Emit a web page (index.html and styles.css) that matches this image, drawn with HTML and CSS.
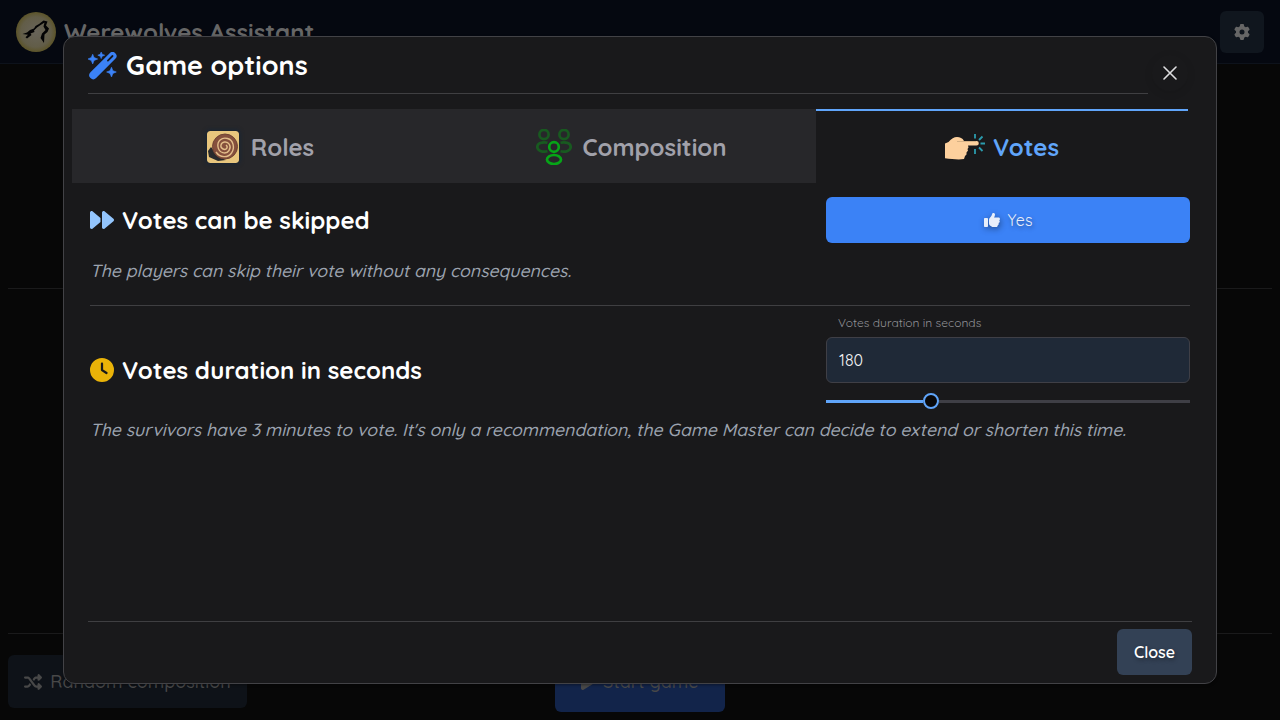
FILE: index.html
```html
<!DOCTYPE html>
<html lang="en">
<head>
<meta charset="utf-8">
<title>Werewolves Assistant</title>
<link rel="stylesheet" href="styles.css">
</head>
<body>
<div class="page">
  <header class="navbar">
    <svg class="logo" viewBox="0 0 40 40"><defs><radialGradient id="moon"><stop offset="0" stop-color="#68645a"/><stop offset=".75" stop-color="#625d48"/><stop offset="1" stop-color="#5c5429"/></radialGradient></defs><circle cx="20" cy="20" r="20" fill="url(#moon)"/><path fill="#030304" d="M6.500 22L11 20.500L14 18L18 16.500L19.500 14L23 12L27.500 8.500L31.500 9.500L30 13.500L33 16.500L31.500 20L28.500 22.500L28 31L24.500 26L26 21.500L29.500 18L27.500 14.500L28.500 10.500L23.500 13.800L21 15.500L18 18.500L18.500 20L14.500 21.500L15.500 23L11 26.500L9.500 25.200L12 22.800z"/></svg>
    <span class="brand">Werewolves Assistant</span>
    <button class="settings"><svg viewBox="0 0 512 512"><path d="M495.900 166.600c3.200 8.700 .5 18.400-6.400 24.600l-43.300 39.400c1.100 8.300 1.700 16.800 1.700 25.400s-.6 17.100-1.700 25.400l43.300 39.400c6.900 6.200 9.600 15.900 6.400 24.600c-4.400 11.900-9.700 23.300-15.800 34.300l-4.700 8.100c-6.600 11-14 21.400-22.100 31.200c-5.900 7.200-15.700 9.600-24.500 6.800l-55.700-17.700c-13.400 10.300-28.200 18.900-44 25.400l-12.500 57.100c-2 9.100-9 16.300-18.200 17.800c-13.800 2.300-28 3.500-42.500 3.500s-28.700-1.200-42.500-3.500c-9.200-1.500-16.200-8.700-18.200-17.800l-12.500-57.100c-15.800-6.500-30.600-15.100-44-25.400L83.100 425.900c-8.800 2.800-18.600 .3-24.500-6.800c-8.100-9.800-15.500-20.200-22.100-31.200l-4.700-8.100c-6.100-11-11.400-22.400-15.800-34.300c-3.200-8.700-.5-18.400 6.400-24.600l43.300-39.400C64.600 273.100 64 264.600 64 256s.6-17.100 1.700-25.400L22.400 191.200c-6.900-6.200-9.600-15.900-6.400-24.600c4.400-11.900 9.700-23.300 15.800-34.300l4.700-8.100c6.600-11 14-21.400 22.100-31.200c5.900-7.200 15.700-9.600 24.500-6.800l55.700 17.700c13.400-10.300 28.200-18.900 44-25.400l12.500-57.100c2-9.100 9-16.300 18.200-17.800C227.300 1.200 241.500 0 256 0s28.700 1.200 42.500 3.500c9.200 1.500 16.200 8.700 18.200 17.800l12.500 57.100c15.800 6.500 30.600 15.100 44 25.400l55.700-17.700c8.800-2.800 18.600-.3 24.500 6.800c8.100 9.800 15.500 20.200 22.100 31.200l4.700 8.100c6.100 11 11.400 22.400 15.800 34.300zM256 336a80 80 0 1 0 0-160 80 80 0 1 0 0 160z"/></svg></button>
  </header>
  <main class="lobby"></main>
  <footer class="actions">
    <button class="random"><svg viewBox="0 0 512 512"><path d="M403.800 34.400c12-5 25.700-2.200 34.900 6.900l64 64c6 6 9.400 14.100 9.400 22.600s-3.400 16.600-9.400 22.600l-64 64c-9.200 9.200-22.900 11.900-34.900 6.900s-19.800-16.600-19.800-29.600V160H352c-10.100 0-19.600 4.700-25.600 12.800L284 229.300 244 176l31.200-41.600C293.300 110.200 321.800 96 352 96h32V64c0-12.900 7.800-24.600 19.800-29.600zM164 282.700L204 336l-31.200 41.600C154.700 401.800 126.200 416 96 416H32c-17.700 0-32-14.300-32-32s14.300-32 32-32H96c10.100 0 19.600-4.700 25.600-12.800L164 282.700zm274.600 188c-9.200 9.200-22.900 11.900-34.900 6.900s-19.800-16.600-19.800-29.600V416H352c-30.200 0-58.700-14.200-76.800-38.400L121.600 172.800c-6-8.100-15.500-12.800-25.600-12.800H32c-17.700 0-32-14.300-32-32s14.300-32 32-32H96c30.200 0 58.700 14.200 76.800 38.400L326.400 339.200c6 8.100 15.500 12.800 25.600 12.800h32V320c0-12.900 7.800-24.600 19.800-29.600s25.700-2.200 34.900 6.900l64 64c6 6 9.400 14.100 9.400 22.600s-3.400 16.600-9.400 22.600l-64 64z"/></svg><span>Random composition</span></button>
    <button class="start"><svg viewBox="0 0 384 512"><path d="M73 39c-14.800-9.100-33.400-9.400-48.500-.9S0 62.600 0 80V432c0 17.400 9.400 33.400 24.500 41.900s33.700 8.100 48.500-.9L361 297c14.300-8.700 23-24.200 23-41s-8.700-32.200-23-41L73 39z"/></svg><span>Start game</span></button>
  </footer>
</div>

<div class="overlay">
<section class="dialog">
  <div class="dialog-head">
    <h1 class="dialog-title"><svg viewBox="0 0 30 28"><path d="M4.700 2.200L6 5.500L9.700 7L6 8.500L4.700 12L3.300 8.500L0 7L3.300 5.500zM13.200 0L14.200 2.200L16.700 3.200L14.200 4.200L13.200 6.600L12.200 4.200L9.800 3.200L12.200 2.200zM23.500 15.200L24.900 18.700L28.300 20L24.900 21.400L23.500 25L22 21.400L18.600 20L22 18.700z" stroke="currentColor" stroke-width=".6" stroke-linejoin="round"/><path d="M5.300 23.200L24.500 4" stroke="currentColor" stroke-width="8" stroke-linecap="round"/><path d="M19.900 8.600L24.500 4" stroke="#19191b" stroke-width="1.800" stroke-linecap="round"/></svg><span>Game options</span></h1>
    <button class="close-x"><svg viewBox="0 0 14 14"><path d="M1 1l12 12M13 1L1 13"/></svg></button>
  </div>

  <nav class="tabs">
    <div class="tab tab-roles">
      <svg class="roles-icon" viewBox="0 0 32 32"><rect width="32" height="32" rx="3" fill="#e8c67d"/><path d="M1 20l3-4 8 10 7 3-8 1-9-4z" fill="#292a2c"/><circle cx="18" cy="15.500" r="12.500" fill="#85503d"/><circle cx="18" cy="15.500" r="12.500" fill="none" stroke="#6f4333" stroke-width="1"/><path d="M9 21c4 6 12 6 15.500 1s2-13-4-14.500S10 10 11 16s8 8 11 3.500-.5-9-4.500-8.500-5 5.500-1.500 7 5.500-2 3-4" fill="none" stroke="#e2bd8a" stroke-width="1.400"/></svg>
      <span>Roles</span>
    </div>
    <div class="tab tab-composition">
      <svg class="group-icon" viewBox="0 0 36 36" stroke-width="2.700"><g stroke="#185a20"><circle cx="8" cy="5.500" r="4.600"/><circle cx="28" cy="5.500" r="4.600"/><path d="M11.500 13.800C6 12.500 1.300 14.500 1.300 18s5 5.500 10.200 4.300M24.500 13.800c5.500-1.300 10.200.7 10.200 4.200s-5 5.500-10.200 4.300"/></g><g stroke="#06a517"><circle cx="18" cy="18" r="4.800"/><ellipse cx="18" cy="30.500" rx="7" ry="4.500"/></g></svg>
      <span>Composition</span>
    </div>
    <div class="tab active">
      <svg class="vote-icon" viewBox="0 0 40 28"><path fill="#fdd09d" d="M0 10.500L3.500 9C6.500 5.500 9 4 12 4c3 0 5.500 1 7 4h12.500a2.300 2.300 0 0 1 0 4.600H23l.5 2-1 1.500 .5 1.500-1.500 2v2l-1.500 1.500-1 3c-6 .8-12 0-19-.8z"/><path d="M12 8.500h19" stroke="#d6b184" stroke-width="1"/><path d="M30 5.500V1M34 7l3.500-3.500M35.500 10.500H40M34 14.500l3.500 3.500M30 16v5" stroke="#2b9cae" stroke-width="1.800"/></svg>
      <span>Votes</span>
    </div>
  </nav>

  <div class="panel">
    <div class="option skip">
      <div class="option-row">
        <h2><svg class="forward" viewBox="0 0 512 512"><path d="M52.500 440.600c-9.500 7.900-22.800 9.700-34.100 4.400S0 428.400 0 416V96C0 83.600 7.200 72.300 18.400 67s24.500-3.600 34.100 4.400L224 214.300V297.700L52.500 440.600zM256 352V96c0-12.400 7.200-23.700 18.400-29s24.500-3.600 34.100 4.400l192 160c7.300 6.100 11.500 15.100 11.500 24.600s-4.200 18.500-11.500 24.600l-192 160c-9.500 7.900-22.800 9.700-34.100 4.400s-18.400-16.600-18.400-29V352z"/></svg><span>Votes can be skipped</span></h2>
        <button class="yes"><svg viewBox="0 0 512 512"><path d="M313.400 32.900c26 5.200 42.900 30.500 37.700 56.500l-2.300 11.400c-5.300 26.700-15.100 52.100-28.800 75.200H464c26.500 0 48 21.500 48 48c0 18.500-10.500 34.600-25.900 42.600C497 275.400 504 288.900 504 304c0 23.400-16.800 42.900-38.900 47.100c4.400 7.300 6.900 15.800 6.900 24.900c0 21.300-13.900 39.400-33.100 45.600c.7 3.300 1.100 6.800 1.100 10.400c0 26.500-21.500 48-48 48H294.500c-19 0-37.500-5.600-53.300-16.100l-38.500-25.700C176 420.400 160 390.400 160 358.300V247.100c0-29.200 13.300-56.700 36-75l7.400-5.900c26.500-21.200 44.600-51 51.200-84.200l2.300-11.400c5.200-26 30.500-42.900 56.500-37.700zM32 192H96c17.700 0 32 14.300 32 32V448c0 17.700-14.300 32-32 32H32c-17.700 0-32-14.300-32-32V224c0-17.700 14.300-32 32-32z"/></svg><span>Yes</span></button>
      </div>
      <p>The players can skip their vote without any consequences.</p>
    </div>
    <div class="option duration">
      <div class="option-row">
        <h2><svg class="clock" viewBox="0 0 512 512"><path d="M256 0a256 256 0 1 1 0 512A256 256 0 1 1 256 0zM232 120V256c0 8 4 15.500 10.700 20l96 64c11 7.400 25.900 4.400 33.300-6.700s4.400-25.900-6.700-33.300L280 243.200V120c0-13.300-10.700-24-24-24s-24 10.700-24 24z"/></svg><span>Votes duration in seconds</span></h2>
        <div class="field">
          <label>Votes duration in seconds</label>
          <div class="input">180</div>
          <div class="slider"><div class="range"></div><div class="handle"></div><div class="rest"></div></div>
        </div>
      </div>
      <p>The survivors have 3 minutes to vote. It's only a recommendation, the Game Master can decide to extend or shorten this time.</p>
    </div>
  </div>

  <div class="dialog-foot"><button class="close">Close</button></div>
</section>
</div>
</body>
</html>
```
FILE: styles.css
```css
* { box-sizing: border-box; }
body { margin: 0; background: #070707; font-family: Quicksand, Lato, "Open Sans", sans-serif; overflow: hidden; }
button { border: 0; padding: 0; font: inherit; display: flex; align-items: center; justify-content: center; }
h1, h2, p { margin: 0; }
svg { display: block; flex: none; fill: currentColor; }
span, label, p { white-space: nowrap; }

.page { width: 1280px; height: 720px; display: flex; flex-direction: column; }
.navbar { height: 64px; padding: 0 16px; display: flex; align-items: center; gap: 8px; background: #050810; border-bottom: 1px solid #0d121b; }
.logo { width: 40px; height: 40px; }
.brand { font-size: 24px; font-weight: 700; color: #666; }
.settings { margin-left: auto; width: 44px; height: 42px; border-radius: 6px; background: #10161e; color: #666; }
.settings svg { width: 16px; height: 16px; }
.lobby { height: 570px; margin: 0 8px; border-bottom: 1px solid #1a1a1b; background: linear-gradient(#1a1a1b, #1a1a1b) 0 224px / 100% 1px no-repeat; }
.actions { display: flex; align-items: center; padding: 17px 8px 0; gap: 308px; font-size: 18px; font-weight: 500; letter-spacing: .15px; }
.actions button { gap: 8px; color: #484848; border-radius: 6px; }
.random { width: 239px; height: 53px; background: #0e1218; }
.random svg { width: 18px; height: 18px; }
.start { width: 170px; height: 61px; background: #12244a; }
.start svg { width: 13.5px; height: 18px; }

.overlay { position: absolute; inset: 0; display: flex; align-items: center; justify-content: center; }
.dialog { width: 1154px; height: 648px; border: 1px solid #424246; border-radius: 12px; background: #19191b; color: #fff; display: flex; flex-direction: column; box-shadow: 0 1px 3px rgba(0,0,0,.4); }
.dialog-head { height: 72px; padding-left: 24px; display: flex; }
.dialog-title { width: 1060px; height: 57px; border-bottom: 1px solid #3f3f42; display: flex; align-items: center; gap: 8px; font-size: 27px; font-weight: 700; }
.dialog-title svg { width: 30px; height: 28px; margin-top: 2px; color: #3b82f6; }
.dialog-title span { padding-bottom: 1px; }
.close-x { margin-left: 4px; margin-top: 18px; width: 36px; height: 36px; border-radius: 50%; background: none; box-shadow: 0 2px 8px rgba(0,0,0,.1); }
.close-x svg { width: 14px; height: 14px; fill: none; stroke: #dedee0; stroke-width: 1.6; stroke-linecap: round; }

.tabs { display: flex; width: 1116px; height: 74px; margin-left: 8px; }
.tab { width: 372px; padding-top: 2px; background: #27272a; color: #a1a1aa; display: flex; align-items: center; justify-content: center; font-size: 24px; font-weight: 700; }
.tab-roles { padding-left: 5px; }
.tab-composition { padding-left: 3px; }
.tab.active { background: none; border-top: 2px solid #60a5fa; padding-top: 0; color: #60a5fa; }
.roles-icon { width: 32px; height: 32px; margin-right: 12px; border-radius: 3px; box-shadow: 0 0 4px 1px #172536; }
.group-icon { width: 36px; height: 36px; margin-right: 10px; fill: none; }
.vote-icon { width: 40px; height: 28px; margin-right: 8px; }

.panel { flex: 1; padding: 14px 26px 0; }
.skip { height: 109px; border-bottom: 1px solid #3f3f42; }
.option-row { display: flex; justify-content: space-between; align-items: center; }
h2 { display: flex; align-items: center; gap: 8px; font-size: 24px; font-weight: 700; }
h2 svg { width: 24px; height: 24px; }
.forward { color: #93c5fd; }
.clock { color: #eab308; }
.yes { width: 364px; height: 46px; gap: 8px; border-radius: 6px; background: #3b82f6; color: #e8eefa; font-size: 16px; text-shadow: 1px 2px 4px rgba(0,0,0,.4); }
.yes svg { width: 16px; height: 16px; filter: drop-shadow(1px 2px 3px rgba(0,0,0,.4)); }
.option p { font-size: 17.6px; font-weight: 500; line-height: 28px; font-style: italic; color: #9ca3af; }
.skip p { margin-top: 13px; }
.duration .option-row { height: 103px; align-items: flex-start; }
.duration h2 { margin-top: 49px; height: 30px; }
.duration p { margin-top: 6px; }
.field { width: 364px; padding-top: 9px; }
.field label { display: block; padding-left: 12px; font-size: 12px; line-height: 15px; color: #929297; }
.input { margin-top: 7px; height: 46px; border: 1px solid #3f3f46; border-radius: 6px; background: #1f2937; padding: 0 12px; line-height: 44px; font-size: 16px; color: #f4f4f5; }
.slider { height: 16px; margin-top: 10px; display: flex; align-items: center; }
.range { width: 97px; height: 3px; background: #60a5fa; }
.handle { width: 16px; height: 16px; border: 2px solid #60a5fa; border-radius: 50%; background: #09090b; }
.rest { flex: 1; height: 3px; background: #3f3f46; }

.dialog-foot { height: 62px; margin: 0 24px; border-top: 1px solid #3f3f42; padding-top: 7px; display: flex; justify-content: flex-end; }
.close { width: 75px; height: 46px; border-radius: 6px; background: #334155; color: #fff; font-size: 16px; font-weight: 600; text-shadow: 1px 2px 4px rgba(0,0,0,.4); }
```
